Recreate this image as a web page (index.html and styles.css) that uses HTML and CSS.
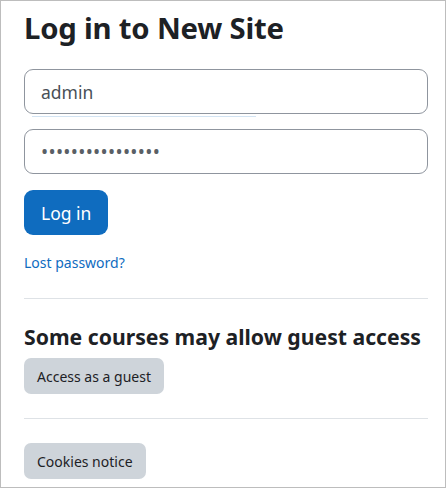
FILE: index.html
```html
<!DOCTYPE html>
<html lang="en">
<head>
    <meta charset="UTF-8">
    <meta name="viewport" content="width=device-width, initial-scale=1.0">
    <title>Log in to New Site</title>
    <link rel="stylesheet" href="styles.css">
</head>
<body>
    <div class="login-box">
        <h1 class="login-heading">Log in to New Site</h1>

        <form class="login-form">
            <input type="text" class="form-control" value="admin">
            <div class="autofill-line"></div>
            <input type="password" class="form-control" value="................">
            <button type="button" class="btn btn-primary">Log in</button>
        </form>

        <a href="#" class="lost-link">Lost password?</a>

        <hr class="divider">

        <h2 class="guest-heading">Some courses may allow guest access</h2>
        <button type="button" class="btn btn-secondary">Access as a guest</button>

        <hr class="divider divider-low">

        <button type="button" class="btn btn-secondary">Cookies notice</button>
    </div>
</body>
</html>
```

FILE: styles.css
```css
html, body {
    margin: 0;
    padding: 0;
}
body {
    font-family: "Noto Sans", "Open Sans", sans-serif;
    color: #1d2125;
    background: #fff;
}
.login-box {
    box-sizing: border-box;
    width: 446px;
    height: 488px;
    border: 1px solid #bdbdbd;
    padding: 9px 17px 0 23px;
    overflow: hidden;
}
.login-heading {
    margin: 0 0 23px;
    font-size: 29.3px;
    line-height: 36px;
    font-weight: 700;
    letter-spacing: -0.2px;
}
.login-form {
    margin: 0;
}
.form-control {
    display: block;
    box-sizing: border-box;
    width: 100%;
    height: 45px;
    margin: 0;
    padding: 0 16px;
    border: 1px solid #8f959e;
    border-radius: 9px;
    font-family: inherit;
    font-size: 17.5px;
    color: #495057;
    background: #fff;
    outline: none;
}
.form-control[type="password"] {
    font-size: 19px;
    letter-spacing: 0.3px;
    color: #5a5f66;
}
.autofill-line {
    width: 224px;
    height: 1px;
    margin: 2px 0 12px 8px;
    background: #d3e4f3;
}
.btn {
    display: block;
    box-sizing: border-box;
    border: 1px solid transparent;
    font-family: inherit;
    cursor: pointer;
}
.btn-primary {
    height: 45px;
    margin-top: 16px;
    padding: 0 16px;
    border-radius: 9px;
    background: #0f6cbf;
    color: #fff;
    font-size: 17.5px;
}
.btn-secondary {
    height: 36px;
    padding: 0 12px;
    border-radius: 7px;
    background: #ced4da;
    color: #1d2125;
    font-size: 14px;
}
.lost-link {
    display: inline-block;
    margin-top: 18px;
    font-size: 14px;
    line-height: 20px;
    color: #0f6cbf;
    text-decoration: none;
}
.divider {
    margin: 25px 0 0;
    border: 0;
    border-top: 1px solid #dee2e6;
}
.guest-heading {
    margin: 24px 0 8px;
    font-size: 21.2px;
    line-height: 27px;
    font-weight: 700;
}
.divider-low {
    margin: 24px 0 24px;
}
```
